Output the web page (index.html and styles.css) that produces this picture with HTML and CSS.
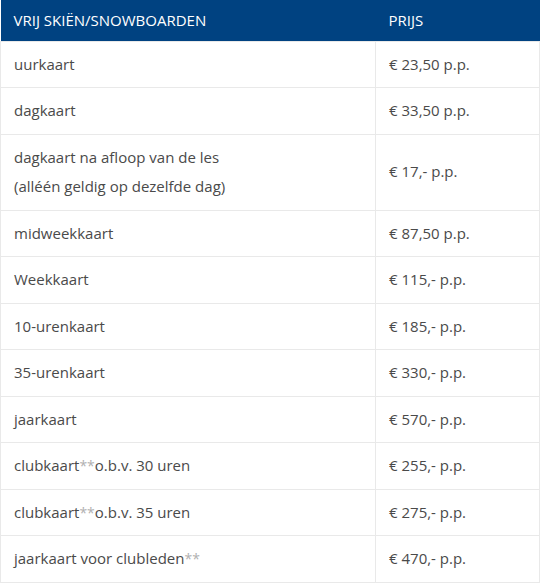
FILE: index.html
```html
<!DOCTYPE html>
<html lang="nl">
<head>
<meta charset="utf-8">
<link rel="stylesheet" href="styles.css">
</head>
<body>
<table class="prices">
  <thead>
    <tr><th class="c1">VRIJ SKIËN/SNOWBOARDEN</th><th class="c2">PRIJS</th></tr>
  </thead>
  <tbody>
    <tr><td>uurkaart</td><td>€ 23,50 p.p.</td></tr>
    <tr><td>dagkaart</td><td>€ 33,50 p.p.</td></tr>
    <tr><td>dagkaart na afloop van de les<br>(alléén geldig op dezelfde dag)</td><td>€ 17,- p.p.</td></tr>
    <tr><td>midweekkaart</td><td>€ 87,50 p.p.</td></tr>
    <tr><td>Weekkaart</td><td>€ 115,- p.p.</td></tr>
    <tr><td>10-urenkaart</td><td>€ 185,- p.p.</td></tr>
    <tr><td>35-urenkaart</td><td>€ 330,- p.p.</td></tr>
    <tr><td>jaarkaart</td><td>€ 570,- p.p.</td></tr>
    <tr><td>clubkaart<span class="ast">**</span>o.b.v. 30 uren</td><td>€ 255,- p.p.</td></tr>
    <tr><td>clubkaart<span class="ast">**</span>o.b.v. 35 uren</td><td>€ 275,- p.p.</td></tr>
    <tr><td>jaarkaart voor clubleden<span class="ast">**</span></td><td>€ 470,- p.p.</td></tr>
  </tbody>
</table>
</body>
</html>
```
FILE: styles.css
```css
html, body {
  margin: 0;
  padding: 0;
  background: #ffffff;
}
.prices {
  width: 540px;
  border-collapse: collapse;
  font-family: "Open Sans", "Noto Sans", sans-serif;
  font-size: 15px;
  color: #4a4a4a;
}
.prices th {
  background: #004281;
  color: #ffffff;
  font-weight: 400;
  font-size: 15px;
  text-align: left;
  height: 41px;
  padding: 0 13px;
  box-sizing: border-box;
}
.prices th.c1 { width: 375px; }
.prices td {
  padding: 8px 13px;
  line-height: 29.5px;
  border: 1px solid #e9e9e9;
  vertical-align: middle;
}
.prices td:first-child { width: 375px; box-sizing: border-box; }
.ast { color: #b0b0b0; font-size: 14px; line-height: 0; }
```
